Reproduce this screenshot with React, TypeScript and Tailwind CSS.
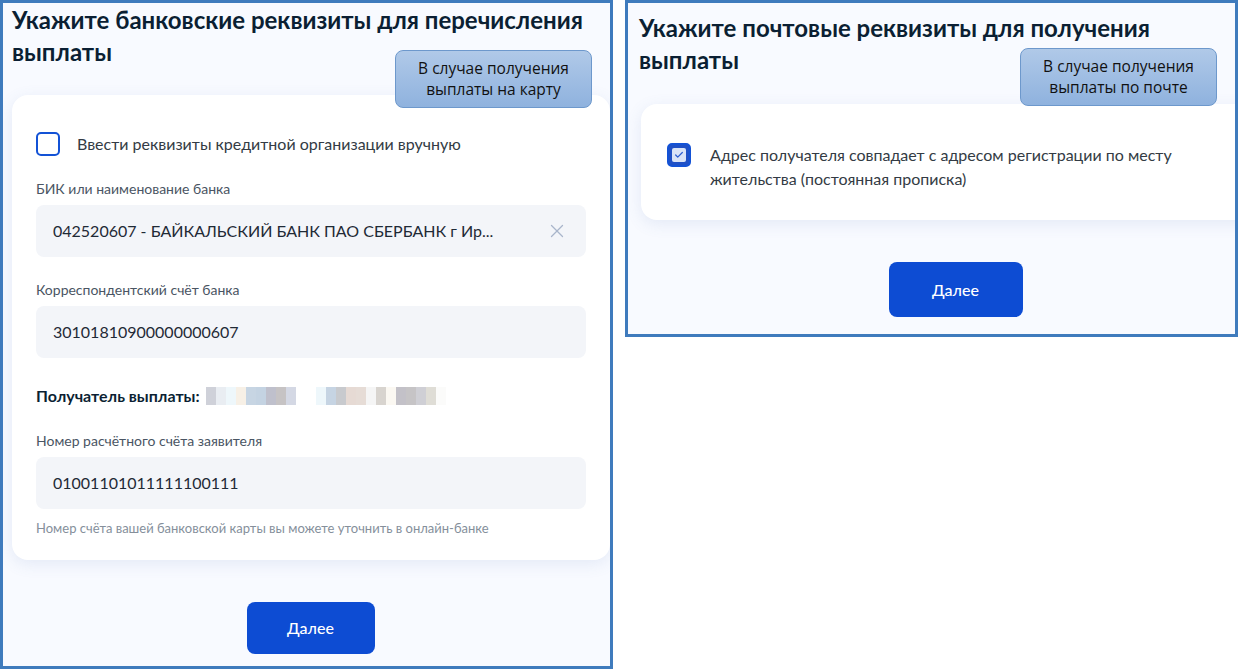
import { X, Check } from "lucide-react";

const font = { fontFamily: "Lato, 'Noto Sans', sans-serif" };
const noteFont = { fontFamily: "'Open Sans', 'Noto Sans', sans-serif" };

// pixelated recipient name
const mosaic = [
  "#cfd1d9", "#e9edf2", "#eef7fb", "#f7f0e6", "#c7d5e3", "#c4d3e2", "#bfc0cc", "#c6c3c4", "#d4d8e4",
  "#ffffff", "#ffffff", "#eef7fb", "#c6d4e3", "#c8cace", "#e6dad4", "#e6dcd6", "#f5f5f5", "#d8d4cf",
  "#fbf8f2", "#c3c1c8", "#c6c4c6", "#cfcfd5", "#dfddd6", "#fbfbfa",
];

function Title({ lines, className }: { lines: string[]; className: string }) {
  return (
    <h1 className={"flex flex-col items-start text-[24px] font-bold leading-[32px] text-[#0b1f33] " + className}>
      {lines.map((l) => (
        <span key={l}>{l}</span>
      ))}
    </h1>
  );
}

function Note({ lines, className }: { lines: string[]; className: string }) {
  return (
    <div
      className={
        "absolute flex h-[58px] w-[197px] flex-col items-center justify-center rounded-lg border border-[#6d98cc] bg-gradient-to-b from-[#b0c9e8] to-[#8fb2de] text-[15.5px] leading-[21px] text-[#111] " +
        className
      }
      style={noteFont}
    >
      {lines.map((l) => (
        <span key={l}>{l}</span>
      ))}
    </div>
  );
}

function Field({ label, value, clear }: { label: string; value: string; clear?: boolean }) {
  return (
    <div className="flex flex-col">
      <div className="text-[14px] leading-[20px] text-[#4a5563]">{label}</div>
      <div className="mt-[6px] flex h-[52px] items-center rounded-lg bg-[#f3f5f9] pl-[17px] pr-[18px] text-[16px] text-[#1f2a36]">
        <span className="flex-1 truncate">{value}</span>
        {clear && <X size={22} strokeWidth={1.4} className="text-[#a9b5cb]" />}
      </div>
    </div>
  );
}

function BankPanel() {
  return (
    <div className="relative h-[669px] w-[613px] shrink-0 overflow-hidden border-[3px] border-[#3f7bbd] bg-[#f8faff]" style={font}>
      <Title className="ml-[9px] mt-[1px]" lines={["Укажите банковские реквизиты для перечисления", "выплаты"]} />
      <div className="ml-[9px] mt-[27px] flex w-[598px] flex-col rounded-2xl bg-white px-[24px] pb-[21px] pt-[37px] shadow-[0_4px_16px_rgba(86,116,177,0.12)]">
        <label className="flex items-center gap-[17px]">
          <span className="h-[24px] w-[24px] rounded-[5px] border-2 border-[#1352d6]" />
          <span className="text-[16px] text-[#333b44]">Ввести реквизиты кредитной организации вручную</span>
        </label>
        <div className="mt-[23px] flex flex-col gap-[23px]">
          <Field label="БИК или наименование банка" value="042520607 - БАЙКАЛЬСКИЙ БАНК ПАО СБЕРБАНК г Ир..." clear />
          <Field label="Корреспондентский счёт банка" value="30101810900000000607" />
        </div>
        <div className="mt-[26px] flex items-center gap-[6px]">
          <span className="text-[16px] font-bold text-[#0b1f33]">Получатель выплаты:</span>
          <div className="flex h-[18px] blur-[0.6px]">
            {mosaic.map((c, i) => (
              <span key={i} className="h-full w-[10px]" style={{ background: c }} />
            ))}
          </div>
        </div>
        <div className="mt-[23px]">
          <Field label="Номер расчётного счёта заявителя" value="01001101011111100111" />
        </div>
        <div className="mt-[10px] text-[13px] text-[#858f9b]">
          Номер счёта вашей банковской карты вы можете уточнить в онлайн-банке
        </div>
      </div>
      <div className="mt-[42px] flex justify-center pl-[8px]">
        <button className="h-[52px] w-[128px] rounded-lg bg-[#0d4cd3] text-[16px] font-medium text-white">
          Далее
        </button>
      </div>
      <Note className="left-[392px] top-[47px]" lines={["В случае получения", "выплаты на карту"]} />
    </div>
  );
}

function PostPanel() {
  return (
    <div className="relative h-[337px] w-[613px] shrink-0 overflow-hidden border-[3px] border-[#3f7bbd] bg-[#f8faff]" style={font}>
      <Title className="ml-[11px] mt-[9px]" lines={["Укажите почтовые реквизиты для получения", "выплаты"]} />
      <div className="ml-[13px] mt-[28px] flex w-[620px] items-start gap-[19px] rounded-l-2xl bg-white px-[26px] pb-[29px] pt-[39px] shadow-[0_4px_16px_rgba(86,116,177,0.12)]">
        <span className="flex h-[24px] w-[24px] shrink-0 items-center justify-center rounded-[5px] border-2 border-[#1352d6] bg-[#1f50c6]">
          <span className="flex h-[14px] w-[14px] items-center justify-center rounded-[2px] bg-[#d9e3f7]">
            <Check size={10} strokeWidth={3} className="text-[#2d5ed0]" />
          </span>
        </span>
        <span className="w-[510px] text-[16px] leading-[24px] text-[#333b44]">
          Адрес получателя совпадает с адресом регистрации по месту жительства (постоянная прописка)
        </span>
      </div>
      <div className="mt-[42px] flex justify-center pl-[48px]">
        <button className="h-[55px] w-[134px] rounded-lg bg-[#0d4cd3] text-[16px] font-medium text-white">
          Далее
        </button>
      </div>
      <Note className="left-[392px] top-[45px]" lines={["В случае получения", "выплаты по почте"]} />
    </div>
  );
}

export default function App() {
  return (
    <div className="flex h-[669px] w-[1239px] items-start gap-[12px] overflow-hidden bg-white">
      <BankPanel />
      <PostPanel />
    </div>
  );
}
